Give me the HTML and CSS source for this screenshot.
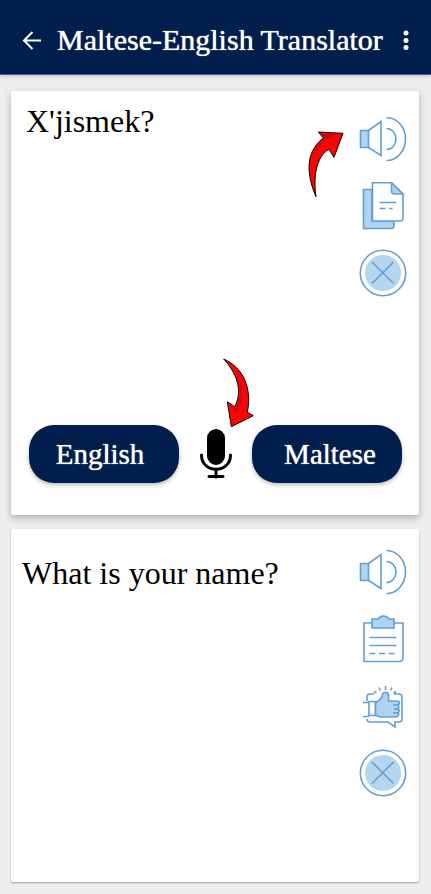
FILE: index.html
```html
<!DOCTYPE html>
<html lang="en">
<head>
<meta charset="utf-8">
<meta name="viewport" content="width=device-width, initial-scale=1">
<title>Maltese-English Translator</title>
<link rel="stylesheet" href="styles.css">
</head>
<body>
<svg class="defs" aria-hidden="true">
  <symbol id="speaker" viewBox="0 0 48 48">
    <path class="tint" d="M1.500 15.500h8v17h-8z"/>
    <path d="M9.500 15.500 22 6.500v34L9.500 32.500M22 6.500v34M27.500 13.500a9.500 10.500 0 0 1 0 21M27.500 2.500a19 21.500 0 0 1 0 43"/>
  </symbol>
  <symbol id="close" viewBox="0 0 48 48">
    <circle cx="24" cy="24" r="22.700"/>
    <circle class="disc" cx="24" cy="24" r="18"/>
    <path d="m13 13 21.500 21.500M34.500 13 13 34.500"/>
  </symbol>
</svg>

<header class="bar">
  <button class="bar-button" type="button" aria-label="Back">
    <svg width="20" height="20" viewBox="0 0 20 20"><path class="back" d="M19 10.500H2M10.500 2 2 10.500l8.500 8.500"/></svg>
  </button>
  <h1 class="title">Maltese-English Translator</h1>
  <button class="bar-button more" type="button" aria-label="More options">
    <svg width="8" height="20" viewBox="0 0 8 20"><circle cx="5" cy="3" r="2.500"/><circle cx="5" cy="10.500" r="2.500"/><circle cx="5" cy="17.500" r="2.500"/></svg>
  </button>
</header>

<main class="cards">
  <section class="card source">
    <div class="content">
      <textarea class="phrase" aria-label="Text to translate" rows="1" spellcheck="false">X'jismek?</textarea>
      <div class="tools">
        <button class="tool" type="button" aria-label="Listen"><svg><use href="#speaker"/></svg></button>
        <button class="tool" type="button" aria-label="Copy">
          <svg viewBox="0 0 48 48">
            <path class="tint" d="M13 7.500H4.500v39H32q3 0 3-3V39H13z"/>
            <path class="paper" d="M13.500.800h19L44 12v24q0 3-3 3H13.500z"/>
            <path class="tint" d="M32.500.800V9q0 3 3 3H44z"/>
            <path d="M20.500 20.500h17M20.500 26.500h6M30 26.500h3.500"/>
          </svg>
        </button>
        <button class="tool" type="button" aria-label="Clear"><svg><use href="#close"/></svg></button>
      </div>
    </div>
    <svg class="arrow arrow-listen" viewBox="15 120 120 204" aria-hidden="true">
      <path d="M129 130 55 126l15 18C28 176 10 232 48 320 39 260 49 198 87 178l15 24z"/>
      <path class="shade" d="m61 130 55 3-38 13-34 46c3-21 12-35 31-48z"/>
    </svg>
    <div class="languages">
      <button class="language from" type="button">English</button>
      <div class="voice">
        <button class="mic" type="button" aria-label="Speak">
          <svg width="34" height="50" viewBox="0 0 34 50">
            <rect x="8" width="18" height="36" rx="9"/>
            <path d="M2.500 26c0 19 29 19 29 0M17 41v7M10 47.500h14"/>
          </svg>
        </button>
        <svg class="arrow arrow-voice" viewBox="63 36 99 213" aria-hidden="true">
          <path d="M68 42c58 25 86 87 71 160l18 10-66 33-12-75 22 15c20-36 17-89-33-143z"/>
          <path class="shade" d="m84 180 19 12c18-32 18-70 6-98 24 42 13 84-3 110z"/>
        </svg>
      </div>
      <button class="language to" type="button">Maltese</button>
    </div>
  </section>

  <section class="card result">
    <div class="content">
      <p class="phrase">What is your name?</p>
      <div class="tools">
        <button class="tool" type="button" aria-label="Listen to translation"><svg><use href="#speaker"/></svg></button>
        <button class="tool" type="button" aria-label="Copy translation">
          <svg viewBox="0 0 48 48">
            <path d="M13 8H5v38.500h35q4 0 4-4V8h-9"/>
            <path class="tint" d="M13 4h6q2-3 5.500-3T30 4h5v9H13z"/>
            <path d="M10.500 22.500h27M10.500 30.500h27M10.500 38.500h6M20 38.500h6M29.500 38.500h6"/>
          </svg>
        </button>
        <button class="tool" type="button" aria-label="Rate translation">
          <svg viewBox="0 0 48 48">
            <path d="M15 12h-4q-3 0-3 3v4M35 12h5q3 0 3 3v22q0 3-3 3h-4v5l-7-5H11q-3 0-3-3M26.500 4v4M20 5.500l1.500 3M33 5.500 31.500 8.500M15 9.500l2.500 1.500M37 9.500 34.500 11M4 20.500h6M4 34.500h6"/>
            <path class="paper" d="M10 19.500h6.500v14H10z"/>
            <path class="tint" d="M16.500 21q7-4 7-9c2-3 6-2 6 2v5h8q3 0 3 2t-3 2h1q3 1 0 4h1q2 2-1 4h1q1 3-3 4H21l-4.500-2z"/>
            <path d="M34 23h4M35 27h4M34 31h4M13 31v.500"/>
          </svg>
        </button>
        <button class="tool" type="button" aria-label="Clear translation"><svg><use href="#close"/></svg></button>
      </div>
    </div>
  </section>
</main>
</body>
</html>
```
FILE: styles.css
```css
* {
  box-sizing: border-box;
}

body {
  margin: 0;
  min-height: 100vh;
  display: flex;
  flex-direction: column;
  background: #eeeeee;
  color: #000;
  font-family: "Liberation Serif", serif;
}

button {
  padding: 0;
  border: 0;
  background: none;
  font: inherit;
  cursor: pointer;
}

svg {
  display: block;
}

.defs {
  position: absolute;
  width: 0;
  height: 0;
}

.bar {
  display: flex;
  align-items: center;
  gap: 15px;
  padding: 22px 20px 16px 22px;
  background: #001f4d;
  border-bottom: 1px solid #4c5f80;
  box-shadow: 0 1px 4px #0003;
}

.bar-button {
  flex: none;
  fill: #fff;
}

.back {
  fill: none;
  stroke: #fff;
  stroke-width: 2;
}

.title {
  flex: 1;
  margin: 0;
  color: #fff;
  font-size: 30px;
  line-height: 36px;
  font-weight: 400;
  white-space: nowrap;
  text-shadow: 0 0 1px #fff;
}

.more {
  width: 10px;
}

.cards {
  flex: 1;
  display: flex;
  flex-direction: column;
  gap: 14px;
  padding: 16px 12px 12px 11px;
}

.card {
  position: relative;
  display: flex;
  flex-direction: column;
  background: #fff;
  border-radius: 2px;
}

.source {
  flex: 423 0 0;
  box-shadow: 0 3px 7px #0004;
}

.result {
  flex: 353 0 0;
  box-shadow: 0 1px 2px #0005;
}

.content {
  flex: 1;
  display: flex;
}

.source .content {
  padding: 11px 12px 0 15px;
}

.result .content {
  padding: 19px 12px 0 11px;
}

.phrase {
  flex: 1;
  min-width: 0;
  margin: 0;
  padding: 0;
  border: 0;
  outline: 0;
  resize: none;
  background: none;
  color: #000;
  font-family: inherit;
  font-size: 32px;
  line-height: 38px;
}

.result .phrase {
  padding-top: 6px;
}

.tools {
  flex: none;
  display: flex;
  flex-direction: column;
  gap: 19px;
}

.source .tools {
  padding-top: 13px;
}

.tool,
.tool svg {
  width: 48px;
  height: 48px;
}

.tool svg {
  fill: none;
  stroke: #649fd0;
  stroke-width: 1.6;
}

.tool svg .tint {
  fill: #add4f2;
}

.tint {
  fill: #add4f2;
}

.disc {
  fill: #b5d6ef;
  stroke: none;
}

.paper {
  fill: #fff;
}

.languages {
  display: flex;
  align-items: center;
  justify-content: space-between;
  padding: 0 17px 32px 18px;
}

.language {
  width: 150px;
  height: 58px;
  border-radius: 25px;
  background: #001f4d;
  box-shadow: 0 2px 4px #0004;
  color: #fff;
  font-size: 29px;
  line-height: 36px;
  text-shadow: 0 0 1px #fff;
}

.from {
  padding-right: 8px;
}

.to {
  padding-left: 6px;
}

.voice {
  position: relative;
}

.mic {
  display: block;
}

.mic path {
  fill: none;
  stroke: #000;
  stroke-width: 3;
  stroke-linecap: round;
}

.arrow {
  position: absolute;
  fill: #f80505;
  stroke: #100;
  stroke-width: 3;
}

.shade {
  fill: #c80812;
  stroke: none;
}

.arrow-listen {
  top: 39px;
  right: 74px;
  width: 40px;
  height: 68px;
}

.arrow-voice {
  bottom: 51px;
  left: 23px;
  width: 33px;
  height: 71px;
}
```
